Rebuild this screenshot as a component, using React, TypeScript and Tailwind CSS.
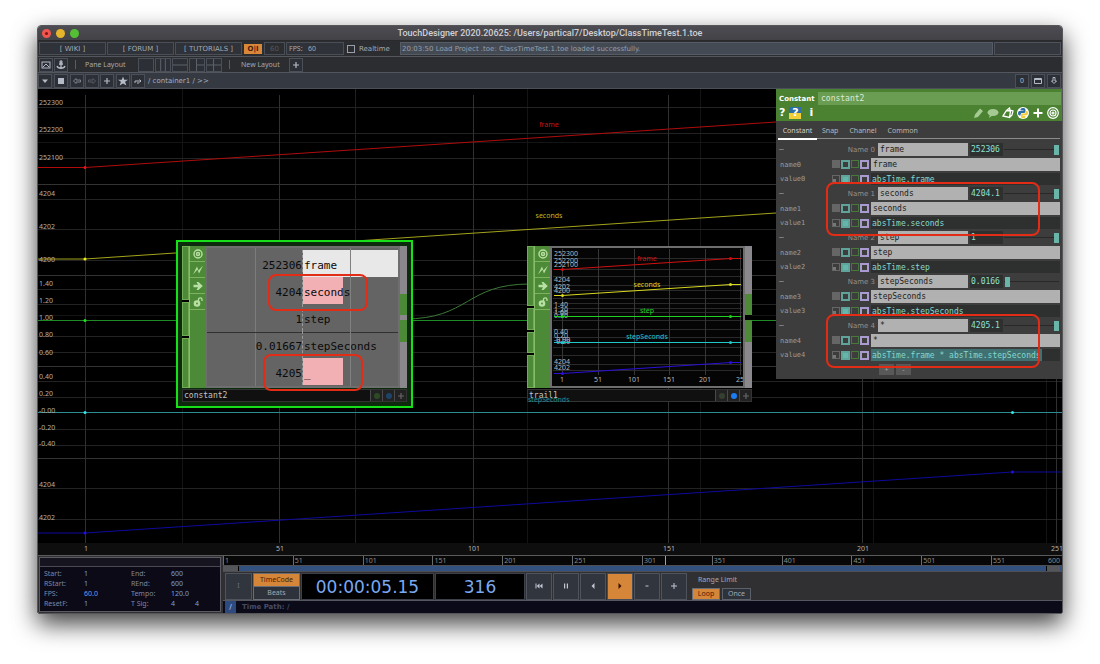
import type { ReactNode } from "react";
import clsx from "clsx";
import { twMerge } from "tailwind-merge";

type Tick = { label: string; y: number };

const yLabels: Tick[] = [
  { label: "252300", y: 105 },
  { label: "252200", y: 132 },
  { label: "252100", y: 160 },
  { label: "4204", y: 196 },
  { label: "4202", y: 229 },
  { label: "4200", y: 262 },
  { label: "1.40", y: 286 },
  { label: "1.20", y: 303 },
  { label: "1.00", y: 320 },
  { label: "0.80", y: 337 },
  { label: "0.60", y: 355 },
  { label: "0.40", y: 379 },
  { label: "0.20", y: 396 },
  { label: "-0.00", y: 413 },
  { label: "-0.20", y: 430 },
  { label: "-0.40", y: 446 },
  { label: "4204", y: 487 },
  { label: "4202", y: 520 },
];

const gridRows = [107, 133, 158, 199, 229, 260, 289, 304, 336, 352, 381, 397, 429, 445, 488, 519];
const laneRows = [184, 275, 366, 458];
const xTicks = [1, 51, 101, 151, 201, 251];

const trailLabels: Tick[] = [
  { label: "252300", y: 256 },
  { label: "252200", y: 263 },
  { label: "252100", y: 267 },
  { label: "4204", y: 282 },
  { label: "4202", y: 289 },
  { label: "4200", y: 293 },
  { label: "1.40", y: 307 },
  { label: "1.20", y: 312 },
  { label: "1.00", y: 315 },
  { label: "0.80", y: 318 },
  { label: "0.40", y: 334 },
  { label: "0.20", y: 338 },
  { label: "-0.00", y: 342 },
  { label: "-0.20", y: 344 },
  { label: "4204", y: 364 },
  { label: "4202", y: 370 },
];

const trailLines = [
  { name: "frame", color: "#d01010", y0: 269, y1: 258, ty: 261 },
  { name: "seconds", color: "#d8d820", y0: 295, y1: 284, ty: 287 },
  { name: "step", color: "#20d020", y0: 316, y1: 316, ty: 313 },
  { name: "stepSeconds", color: "#20c8c8", y0: 342, y1: 342, ty: 339 },
  { name: "", color: "#2a10d8", y0: 373, y1: 362, ty: 0 },
];

const params = [
  { name: "frame", value: "252306", expr: "absTime.frame", pos: 100 },
  { name: "seconds", value: "4204.1", expr: "absTime.seconds", pos: 100 },
  { name: "step", value: "1", expr: "absTime.step", pos: 100 },
  { name: "stepSeconds", value: "0.0166", expr: "absTime.stepSeconds", pos: 2 },
  { name: "*", value: "4205.1", expr: "absTime.frame * absTime.stepSeconds", pos: 100 },
];

const channels = [
  { value: "252306", name: "frame", bar: "w-[95px] bg-[#e8e8e8]" },
  { value: "4204", name: "seconds", bar: "w-10 bg-[#f2b0b4]" },
  { value: "1", name: "step", bar: "w-0" },
  { value: "0.01667", name: "stepSeconds", bar: "w-0" },
  { value: "4205", name: "_", bar: "w-10 bg-[#f2b0b4]" },
];

const timeInfo = [
  ["Start:", "1", "End:", "600", ""],
  ["RStart:", "1", "REnd:", "600", ""],
  ["FPS:", "60.0", "Tempo:", "120.0", ""],
  ["ResetF:", "1", "T Sig:", "4", "4"],
];

const ToolButton = ({
  label,
  children,
  className,
}: {
  label: string;
  children?: ReactNode;
  className?: string;
}) => (
  <button
    type="button"
    aria-label={label}
    className={twMerge(
      "flex h-[14px] w-[14px] shrink-0 items-center justify-center border border-[#4b4f57] bg-[#2c2f35] text-[#b4bac6]",
      className
    )}
  >
    {children}
  </button>
);

const TitleBar = () => (
  <header className="relative flex h-[15px] items-center justify-center border-b border-[#2a2a2d] bg-gradient-to-b from-[#4c4c52] to-[#424247]">
    <div className="absolute left-1 flex gap-[5px]">
      <span className="flex size-[9px] items-center justify-center rounded-full bg-[#f0564f]">
        <span className="size-[3px] rounded-full bg-[#7a1410]" />
      </span>
      <span className="size-[9px] rounded-full bg-[#e5b52c]" />
      <span className="size-[9px] rounded-full bg-[#54bf35]" />
    </div>
    <h1 className="font-['Roboto'] text-[9px] font-medium text-[#d0d0d4]">
      TouchDesigner 2020.20625: /Users/partical7/Desktop/ClassTimeTest.1.toe
    </h1>
  </header>
);

const MenuBar = () => (
  <nav className="flex h-4 items-center gap-px border-b border-[#53565c] bg-[#2b2d31] px-px font-['DejaVu_Sans'] text-[#a4a9b3]">
    {["WIKI", "FORUM", "TUTORIALS"].map((item) => (
      <a
        key={item}
        href="#"
        className="flex h-[13px] w-[67px] items-center justify-center border border-[#4a4e56] bg-[#2f3238]"
      >
        [ {item} ]
      </a>
    ))}
    <button
      type="button"
      className="ml-px h-[10px] w-[18px] bg-[#d9883a] font-bold leading-[10px] text-[#4a1c08]"
    >
      O|I
    </button>
    <button
      type="button"
      className="ml-px flex h-[13px] w-[21px] items-center justify-center border border-[#4a4e56] text-[#54585f]"
    >
      60
    </button>
    <div className="flex h-[13px] w-[58px] items-center whitespace-pre border border-[#4a4e56] bg-[#2f3238] px-0.5 font-['Noto_Sans']">
      FPS:{"   "}60
    </div>
    <label className="ml-0.5 flex w-[52px] items-center gap-1 text-[#a4a9b3]">
      <input type="checkbox" className="size-2 appearance-none border border-[#9a9ea8]" />
      Realtime
    </label>
    <div className="flex h-[13px] flex-1 items-center truncate border border-[#565c66] bg-[#434a54] px-px text-[#959fad]">
      20:03:50 Load Project .toe: ClassTimeTest.1.toe loaded successfully.
    </div>
    <div className="h-[13px] w-[67px] border border-[#4e525a] bg-[#34373e]" />
  </nav>
);

const layoutPaths = ["", "M5 0V12M10 0V12", "M0 6H15", "M7 0V12M7 6H15", "M7 0V12M0 6H15"];

const LayoutBar = () => (
  <div className="flex h-4 items-center gap-px border-b border-[#53565c] bg-[#2b2d30] px-px text-[#a4a9b3]">
    <ToolButton label="Palette">
      <svg viewBox="0 0 10 10" className="size-[10px]" fill="none" stroke="currentColor">
        <rect x="1" y="2" width="8" height="6" />
        <path d="M2 7L5 4L8 7" />
      </svg>
    </ToolButton>
    <ToolButton label="Anchor">
      <svg viewBox="0 0 10 10" className="size-[10px]" fill="none" stroke="currentColor" strokeWidth="1.3">
        <path d="M5 2V9M3 4H7M1 6C2 9 8 9 9 6" />
        <circle cx="5" cy="1.8" r="1" />
      </svg>
    </ToolButton>
    <span className="mx-1.5 h-[9px] w-px bg-[#5a5d63]" />
    <span className="mx-0.5 w-[50px]">Pane Layout</span>
    {layoutPaths.map((d, i) => (
      <ToolButton key={i} label={`Layout ${i + 1}`} className="w-4">
        <svg viewBox="0 0 15 12" preserveAspectRatio="none" className="size-full" fill="none" stroke="#60646c">
          <path d={d} />
        </svg>
      </ToolButton>
    ))}
    <span className="ml-1.5 h-[9px] w-px bg-[#5a5d63]" />
    <span className="ml-2.5 w-[47px]">New Layout</span>
    <ToolButton label="Add layout">
      <PlusGlyph />
    </ToolButton>
  </div>
);

const PlusGlyph = () => (
  <svg viewBox="0 0 8 8" className="size-2" stroke="currentColor" strokeWidth="1.2">
    <path d="M4 1V7M1 4H7" />
  </svg>
);

const PathBar = () => (
  <div className="flex h-4 items-center gap-px border-b border-[#4b4f57] bg-[#343942] text-[#a9b0bd]">
    <ToolButton label="History">
      <svg viewBox="0 0 8 8" className="size-2" fill="currentColor">
        <path d="M1 2.500H7L4 6Z" />
      </svg>
    </ToolButton>
    <ToolButton label="Stop" className="ml-px">
      <span className="size-1.5 bg-[#b4bac6]" />
    </ToolButton>
    <ToolButton label="Back" className="ml-px text-[#7d828c]">
      <svg viewBox="0 0 10 8" className="h-2 w-[10px]" fill="none" stroke="currentColor">
        <path d="M1.5 4L4 1.5V3H8.500V5H4V6.500Z" />
      </svg>
    </ToolButton>
    <ToolButton label="Forward" className="text-[#565b64]">
      <svg viewBox="0 0 10 8" className="h-2 w-[10px]" fill="none" stroke="currentColor">
        <path d="M8.500 4L6 1.500V3H1.500V5H6V6.500Z" />
      </svg>
    </ToolButton>
    <ToolButton label="Add">
      <PlusGlyph />
    </ToolButton>
    <ToolButton label="Bookmark" className="ml-px">
      <svg viewBox="0 0 24 24" className="size-[10px]" fill="currentColor">
        <path d="M12 1l3 8h9l-7 5 3 9-8-5-8 5 3-9-7-5h9z" />
      </svg>
    </ToolButton>
    <ToolButton label="Up">
      <svg viewBox="0 0 10 8" className="h-2 w-[10px]" fill="none" stroke="currentColor">
        <path d="M2 6V4H8M6.500 2.500L8 4L6.500 5.500M4 6H6" />
      </svg>
    </ToolButton>
    <span className="flex-1 pl-0.5 font-['DejaVu_Sans']">/ container1 / &gt;&gt;</span>
    <div className="flex gap-0.5 pr-px">
      <ToolButton label="Level">0</ToolButton>
      <ToolButton label="Maximize">
        <svg viewBox="0 0 8 8" className="size-2" fill="none" stroke="currentColor">
          <path d="M.5 1.500H7.500V6.500H.5ZM.5 2.500H7.500" />
        </svg>
      </ToolButton>
      <ToolButton label="Collapse">
        <svg viewBox="0 0 8 8" className="size-2" fill="none" stroke="currentColor">
          <path d="M3 .5H5V4H6.500L4 6.500L1.500 4H3Z" />
        </svg>
      </ToolButton>
    </div>
  </div>
);

const Backdrop = () => (
  <svg
    viewBox="38 89 1024 466"
    preserveAspectRatio="xMinYMin slice"
    className="absolute inset-0 size-full text-[7px]"
    fill="none"
  >
    <rect x="38" y="543" width="1024" height="12" fill="#0e0e0e" />
    {[182, 355, 527, 700, 873, 1046].map((x) => (
      <path key={x} d={`M${x}.5 89V543`} stroke={x === 355 ? "#1c1c3c" : "#141416"} />
    ))}
    {[142, 315].map((y) => (
      <path key={y} d={`M38 ${y}.5H1062`} stroke="#141416" />
    ))}
    {gridRows.map((y) => (
      <path key={y} d={`M38 ${y}.5H1062`} stroke="#232323" />
    ))}
    {laneRows.map((y) => (
      <path key={y} d={`M38 ${y}.5H1062`} stroke="#333333" />
    ))}
    {xTicks.map((t, i) => (
      <g key={t}>
        <path d={`M${85 + Math.round(i * 194.2)}.5 95V543`} stroke="#303030" />
        <text x={86 + Math.round(i * 194.2)} y="551" textAnchor="middle" fill="#b4b4b4">
          {t}
        </text>
      </g>
    ))}
    <path d="M38 167.500H85L776 122L1062 103" stroke="#b00c0c" />
    <path d="M38 259H85L776 213L1062 194" stroke="#a3a31c" />
    <path d="M38 320.500H1062" stroke="#1f8a26" />
    <path d="M38 412.500H1062" stroke="#2d8d92" />
    <path d="M38 533H85L1012 472H1062" stroke="#0d0a9c" />
    <path d="M404 319C470 319 465 284 530 284" stroke="#3c7a38" />
    <circle cx="85" cy="167.500" r="1.500" fill="#e01818" />
    <circle cx="85" cy="259" r="1.500" fill="#f0f020" />
    <circle cx="85" cy="320.500" r="1.500" fill="#20e020" />
    <circle cx="85" cy="412.500" r="1.500" fill="#30e8e8" />
    <circle cx="1012.500" cy="412.500" r="1.500" fill="#30e8e8" />
    <circle cx="85" cy="533" r="1.500" fill="#2010e0" />
    <circle cx="1012.500" cy="472" r="1.500" fill="#2010e0" />
    {yLabels.map(({ label, y }) => (
      <text key={y} x="39" y={y} fill="#b0b0b0">
        {label}
      </text>
    ))}
    <text x="549" y="127" textAnchor="middle" fill="#c81414">
      frame
    </text>
    <text x="549" y="218" textAnchor="middle" fill="#bcbc1e">
      seconds
    </text>
  </svg>
);

const NodeFlags = () => (
  <div className="flex w-4 flex-col border-l border-[#86bb68] bg-[#4c8a37] text-[#b9e0a4]">
    <button type="button" aria-label="Viewer" className="flex h-4 items-center justify-center border-b border-[#7db35f]">
      <svg viewBox="0 0 10 10" className="size-[10px]" fill="none" stroke="currentColor" strokeWidth="1.400">
        <circle cx="5" cy="5" r="4" />
        <circle cx="5" cy="5" r="1.500" />
      </svg>
    </button>
    <button type="button" aria-label="Clone immune" className="flex h-4 items-center justify-center border-b border-[#7db35f]">
      <svg viewBox="0 0 10 10" className="size-[10px]" fill="currentColor">
        <path d="M0 9.500L4 1.500L5.500 5.500L10 .5L6 8.500L4.500 4.500Z" />
      </svg>
    </button>
    <button type="button" aria-label="Bypass" className="flex h-4 items-center justify-center border-b border-[#7db35f]">
      <svg viewBox="0 0 10 10" className="size-[10px]" fill="currentColor">
        <path d="M.5 3.800H5L3.500 1H5.500L9.800 5L5.500 9H3.500L5 6.200H.5Z" />
      </svg>
    </button>
    <button type="button" aria-label="Lock" className="flex h-4 items-center justify-center border-b border-[#7db35f]">
      <svg viewBox="0 0 10 10" className="size-[10px]" fill="currentColor">
        <circle cx="4" cy="6.500" r="3.300" />
        <path d="M5.500 4V2.500C5.500 .3 9 .3 9 2.500V4" fill="none" stroke="currentColor" strokeWidth="1.300" />
        <circle cx="4" cy="6.500" r=".9" fill="#4c8a37" />
      </svg>
    </button>
  </div>
);

const OpNode = ({
  name,
  viewerOn,
  inputs,
  children,
}: {
  name: string;
  viewerOn?: boolean;
  inputs: ReactNode;
  children: ReactNode;
}) => (
  <div className="w-[225px]">
    <div className="flex h-[142px]">
      <div className="flex w-[7px] flex-col gap-0.5 bg-black">{inputs}</div>
      <NodeFlags />
      <div className="flex-1 border-2 border-[#6e6e6e] bg-[#646464]">{children}</div>
      <div className={clsx("flex w-[7px] flex-col", viewerOn ? "bg-black" : "bg-[#8a888c]")}>
        <span className="h-12 bg-[#8a888c]" />
        <span className="h-[21px] bg-[#4c8a37]" />
        <span className="h-[5px]" />
        <span className="h-[22px] bg-[#4c8a37]" />
        <span className="flex-1 bg-[#8a888c]" />
      </div>
    </div>
    <div className="mt-px flex h-[13px] items-center border border-[#333333] bg-[#101010]">
      <span className="flex-1 pl-px font-['DejaVu_Sans_Mono'] text-[8px] text-[#c4c4c4]">{name}</span>
      <div className="flex h-full">
        <button type="button" aria-label="Render flag" className="flex w-3 items-center justify-center border-l border-[#4a4a4a] bg-[#222222]">
          <span className={clsx("size-1.5 rounded-full", viewerOn ? "bg-[#36402f]" : "bg-[#2c4a24]")} />
        </button>
        <button type="button" aria-label="Display flag" className="flex w-3 items-center justify-center border-l border-[#4a4a4a] bg-[#222222]">
          <span className={clsx("size-1.5 rounded-full", viewerOn ? "bg-[#1c7df2]" : "bg-[#1d4468]")} />
        </button>
        <button type="button" aria-label="Activate" className="flex w-3 items-center justify-center border-l border-[#4a4a4a] bg-[#222222] text-[#666666]">
          <PlusGlyph />
        </button>
      </div>
    </div>
  </div>
);

const inputSegment = "border border-[#71ab54] bg-[#4c8a37]";

const ConstantNode = () => (
  <div className="absolute left-[138px] top-[151px] border-2 border-[#18e018] bg-[#0c2a0c] p-1">
    <OpNode
      name="constant2"
      inputs={
        <>
          <span className={clsx("h-[54px]", inputSegment)} />
          <span className={clsx("h-[34px]", inputSegment)} />
          <span className={clsx("flex-1", inputSegment)} />
        </>
      }
    >
      <div className="relative flex h-full flex-col pt-0.5 font-['DejaVu_Sans_Mono'] text-[11px] leading-[31px] text-[#0a0a0a]">
        <span className="absolute inset-y-0 left-12 w-px bg-[#7c7c7c]" />
        <span className="absolute inset-x-0 top-[84px] h-px bg-[#303030]" />
        {channels.map((chan) => (
          <div key={chan.name} className="flex h-[27px]">
            <span className="w-[95px] shrink-0 text-right">{chan.value}</span>
            <div className="relative h-full flex-1 border-l border-dashed border-[#9a9a9a]">
              <span className={clsx("absolute inset-y-0 left-0", chan.bar)} />
              <span className="relative pl-px">{chan.name}</span>
            </div>
          </div>
        ))}
        <span className="absolute inset-y-0 left-[143px] w-px bg-[#808080]" />
      </div>
    </OpNode>
  </div>
);

const TrailNode = () => (
  <div className="absolute left-[489px] top-[157px]">
    <OpNode
      name="trail1"
      viewerOn
      inputs={
        <>
          <span className={clsx("h-[60px]", inputSegment)} />
          <span className={clsx("h-[22px]", inputSegment)} />
          <span className={clsx("h-[21px]", inputSegment)} />
          <span className={clsx("flex-1", inputSegment)} />
        </>
      }
    >
      <svg viewBox="552 248 191 138" className="size-full bg-[#050505] text-[7px]" fill="none">
        {[258, 269, 276, 285, 290, 298, 303, 308, 312, 320, 329, 337, 347, 355, 364, 370].map((y) => (
          <path key={y} d={`M553 ${y}.5H742`} stroke="#2a2a2a" />
        ))}
        {[562, 598, 634, 669, 705, 740].map((x, i) => (
          <g key={x}>
            <path d={`M${x}.5 249V375`} stroke="#363636" />
            <text x={x} y="382" textAnchor="middle" fill="#b8b8b8">
              {["1", "51", "101", "151", "201", "25"][i]}
            </text>
          </g>
        ))}
        {trailLabels.map(({ label, y }) => (
          <text key={y} x="554" y={y} fill="#b8b8b8">
            {label}
          </text>
        ))}
        {trailLines.map((line) => (
          <g key={line.color} fill={line.color}>
            <path d={`M554 ${line.y0}.5H562L731 ${line.y1}.5H741`} fill="none" stroke={line.color} />
            <circle cx="562.500" cy={line.y0 + 0.5} r="1.500" />
            <circle cx="730.500" cy={line.y1 + 0.5} r="1.500" />
            <text x="647" y={line.ty} textAnchor="middle">
              {line.name}
            </text>
          </g>
        ))}
      </svg>
    </OpNode>
    <span className="absolute left-px top-[149px] leading-[10px] text-[#1a8c90]">stepSeconds</span>
  </div>
);

const ModeBoxes = ({ expression }: { expression?: boolean }) => (
  <div className="flex w-[39px] shrink-0 gap-px">
    <button
      type="button"
      aria-label="Constant mode"
      className={clsx("flex size-2 items-end border border-[#666666]", !expression && "bg-[#666666]")}
    >
      {expression && <span className="size-[3px] bg-[#777777]" />}
    </button>
    <button
      type="button"
      aria-label="Expression mode"
      className={clsx("size-[9px] border-2 border-[#5fa39a]", expression && "bg-[#66b5ab]")}
    />
    <button type="button" aria-label="Export mode" className="size-2 border border-[#477a3a]" />
    <button type="button" aria-label="Bind mode" className="size-[9px] border-2 border-[#a99bd2]" />
  </div>
);

const ParamGroup = ({ index, param }: { index: number; param: (typeof params)[number] }) => {
  const last = index === 4;

  return (
    <div className="font-['DejaVu_Sans_Mono'] text-[8px]">
      <div className="flex h-[15px] items-center">
        <span className="w-[30px] pl-px text-[#9c9c9c]">—</span>
        <label htmlFor={`chan${index}`} className="flex-1 pr-[3px] text-right font-['DejaVu_Sans'] text-[7px] text-[#909090]">
          Name {index}
        </label>
        <input
          id={`chan${index}`}
          defaultValue={param.name}
          className="h-[13px] w-[90px] bg-[#b1b1b1] pl-0.5 text-[#222222]"
        />
        <input
          aria-label={`Value ${index}`}
          defaultValue={param.value}
          className="ml-0.5 h-[13px] w-[33px] bg-[#2e3030] pl-px text-[#8fe0d2]"
        />
        <input
          type="range"
          aria-label={`Slider ${index}`}
          defaultValue={param.pos}
          className="ml-px mr-px h-[11px] w-[55px] appearance-none bg-[linear-gradient(#282828,#282828)] bg-[length:100%_1px] bg-center bg-no-repeat [&::-webkit-slider-thumb]:h-[10px] [&::-webkit-slider-thumb]:w-[5px] [&::-webkit-slider-thumb]:appearance-none [&::-webkit-slider-thumb]:bg-[#6ab5aa]"
        />
      </div>
      <div className="flex h-[15px] items-center">
        <label htmlFor={`name${index}`} className="flex-1 pl-0.5 text-[7px] text-[#9c9c9c]">
          name{index}
        </label>
        <ModeBoxes />
        <input
          id={`name${index}`}
          defaultValue={param.name}
          className="h-[13px] w-[189px] bg-[#b1b1b1] pl-0.5 text-[#222222]"
        />
      </div>
      <div className="flex h-[14px] items-center">
        <label htmlFor={`value${index}`} className="flex-1 pl-0.5 text-[7px] text-[#9c9c9c]">
          value{index}
        </label>
        <ModeBoxes expression />
        <div className="w-[189px] bg-[#2e3030]">
          <input
            id={`value${index}`}
            defaultValue={param.expr}
            className={clsx(
              "block h-[12px] pl-px text-[#86d8cc]",
              last ? "w-[171px] bg-[#3f7072]" : "w-full"
            )}
          />
        </div>
      </div>
    </div>
  );
};

const ParamPanel = () => (
  <aside className="absolute right-0 top-0 w-[286px] bg-[#3d3d3d]">
    <div className="h-8 bg-[#4a8232] px-px pt-[3px] text-white">
      <div className="flex items-center">
        <label htmlFor="opname" className="w-[41px] pl-0.5 font-['DejaVu_Sans'] text-[7px] font-bold">
          Constant
        </label>
        <input
          id="opname"
          defaultValue="constant2"
          className="h-[13px] flex-1 bg-[#6a9c52] pl-[3px] font-['DejaVu_Sans_Mono'] text-[8px] text-[#dcebd2]"
        />
      </div>
      <div className="flex items-center gap-1 px-0.5 pt-0.5 font-['DejaVu_Sans'] text-[11px] font-bold leading-3">
        <button type="button">?</button>
        <button type="button" className="h-3 w-3 bg-[linear-gradient(#2f6ea5_50%,#f2cf3a_50%)]">
          ?
        </button>
        <button type="button" className="pl-1">i</button>
        <div className="flex flex-1 justify-end gap-[3px]">
          <svg viewBox="0 0 12 12" className="size-3" fill="#a5cb92">
            <path d="M2 11L3 7.500L8 1.500L11 4L6 10ZM4 8.500L5 9.500" />
          </svg>
          <svg viewBox="0 0 12 12" className="size-3" fill="#a5cb92">
            <ellipse cx="6" cy="5.500" rx="5.500" ry="3.500" />
            <path d="M3 7L2 11L6 8Z" />
          </svg>
          <svg viewBox="0 0 12 12" className="size-3" fill="none" stroke="#fff" strokeWidth="1.300">
            <path d="M4.500 3.500L8.500 4L7.500 10.500L1 9ZM4.500 3.500L7.500 1L8 3L11 4L10 8L8 10" />
          </svg>
          <svg viewBox="0 0 12 12" className="size-3">
            <circle cx="6" cy="6" r="6" fill="#fff" />
            <path d="M6 1C3.500 1 3.500 2 3.500 3.500H6.500V4H2.500C.5 4 .5 8.500 2.500 8.500H3.500C3.500 5.500 5 6 7 6C8.500 6 8.500 5 8.500 3C8.500 1.500 7.500 1 6 1Z" fill="#2f6ea5" />
            <path d="M6 11.300C8.500 11.300 8.500 10 8.500 8.800H5.500V8.300H9.500C11.500 8 11.500 4 9.500 4H9C9 7 7.500 6.500 5.500 6.500C4 6.500 4 7.500 4 9C4 11 5 11.300 6 11.300Z" fill="#f2cf3a" />
          </svg>
          <svg viewBox="0 0 12 12" className="size-3" stroke="#fff" strokeWidth="2">
            <path d="M6 1.500V10.500M1.500 6H10.500" />
          </svg>
          <svg viewBox="0 0 12 12" className="size-3" fill="none" stroke="#fff" strokeWidth="1.200">
            <circle cx="6" cy="6" r="5.300" />
            <circle cx="6" cy="6" r="3" />
            <circle cx="6" cy="6" r="1" />
          </svg>
        </div>
      </div>
    </div>
    <div className="mx-0.5 flex h-[19px] text-[#b8b8b8]">
      <button type="button" className="h-full w-[39px] border-b-2 border-white pt-0.5 text-[#d0d0d0]">
        Constant
      </button>
      <div className="flex h-[18px] flex-1 gap-[11px] border-b border-[#8c8c8c] pl-[5px] pt-0.5">
        <button type="button">Snap</button>
        <button type="button">Channel</button>
        <button type="button">Common</button>
      </div>
    </div>
    <div className="pl-0.5 pr-0.5 pt-0.5">
      {params.map((param, i) => (
        <ParamGroup key={param.name} index={i} param={param} />
      ))}
    </div>
    <div className="flex h-[17px] gap-0.5 pl-[103px] pt-0.5 text-[#a0a0a0]">
      <button type="button" className="flex h-[11px] w-[15px] items-center justify-center bg-[#585858]">
        +
      </button>
      <button type="button" className="flex h-[11px] w-[15px] items-center justify-center bg-[#585858]">
        -
      </button>
    </div>
  </aside>
);

const Mark = ({ className }: { className: string }) => (
  <div className={clsx("pointer-events-none absolute rounded-lg border-2 border-[#e22c16]", className)} />
);

const Network = () => (
  <main className="relative h-[466px] overflow-hidden bg-black">
    <Backdrop />
    <ConstantNode />
    <TrailNode />
    <ParamPanel />
    <Mark className="left-[230px] top-[185px] h-[37px] w-[100px]" />
    <Mark className="left-[225px] top-[265px] h-[37px] w-[100px]" />
    <Mark className="right-[22px] top-[93px] h-[54px] w-[214px]" />
    <Mark className="right-[22px] top-[225px] h-[54px] w-[214px]" />
  </main>
);

const TransportButton = ({ label, active, d }: { label: string; active?: boolean; d: string }) => (
  <button
    type="button"
    aria-label={label}
    className={clsx(
      "flex h-[27px] w-[26px] items-center justify-center border",
      active ? "border-[#4a4d55] bg-[#d58638] text-[#3a1004]" : "border-[#4f535c] bg-[#31353d] text-[#c0c6d2]"
    )}
  >
    <svg viewBox="0 0 10 10" className="size-[10px]" fill="currentColor">
      <path d={d} />
    </svg>
  </button>
);

const Timeline = () => (
  <footer className="flex h-[58px] border-t border-[#5a5a5a] bg-[#303033]">
    <section className="m-px mr-0.5 w-[182px] border border-[#5a5a62] bg-[#0b0a16]">
      <div className="h-[9px] border-b border-[#4a4a52] bg-[#16151f]" />
      <dl className="pl-1 pt-0.5">
        {timeInfo.map(([a, b, c, d, e]) => (
          <div key={a} className="grid h-[10px] grid-cols-[40px_47px_40px_24px_1fr] items-center leading-[10px] text-[#8088a0]">
            <dt>{a}</dt>
            <dd className="text-[#6f9fe8]">{b}</dd>
            <dt>{c}</dt>
            <dd className="text-[#6f9fe8]">{d}</dd>
            <dd className="text-[#6f9fe8]">{e}</dd>
          </div>
        ))}
      </dl>
    </section>
    <section className="flex min-w-0 flex-1 flex-col">
      <div className="relative flex h-[9px] bg-[#070707] leading-[9px] text-[#8c8c8c]">
        {[1, 51, 101, 151, 201, 251, 301, 351, 401, 451, 501].map((t) => (
          <span key={t} className="flex-[70] border-l border-[#6c6c6c] pl-px">
            {t}
          </span>
        ))}
        <span className="flex flex-[69] justify-between border-l border-[#6c6c6c] pl-px pr-0.5">
          551 <span>600</span>
        </span>
        <span className="absolute inset-y-0 left-[442px] w-px bg-[#7aa8f0]" />
      </div>
      <div className="flex h-[7px] border-y border-[#4d4f55] bg-[#33517f]">
        <span className="w-4 border-r border-black bg-[#55565a]" />
        <span className="flex-1" />
        <span className="mr-0.5 w-[14px] border-l border-black bg-[#55565a]" />
      </div>
      <div className="flex h-[29px] items-center gap-px border-b border-[#55575e] pl-0.5">
        <button type="button" className="h-[27px] w-[27px] border border-[#4f535c] bg-[#31353d] text-[#6c7486]">
          I
        </button>
        <div className="flex h-[27px] w-[47px] flex-col border border-[#6a6d75]">
          <button type="button" className="h-3 bg-[#d58638] leading-3 text-[#4a1c08]">
            TimeCode
          </button>
          <button type="button" className="flex-1 border-t border-[#6a6d75] bg-[#2e323a] leading-3 text-[#a4a9b3]">
            Beats
          </button>
        </div>
        <div className="flex h-[27px] w-[133px] items-center justify-center border border-[#3d4048] bg-black pt-0.5 font-['DejaVu_Sans'] text-[17px] text-[#79a9f2]">
          00:00:05.15
        </div>
        <div className="flex h-[27px] w-[90px] items-center justify-center border border-[#3d4048] bg-black pt-0.5 font-['DejaVu_Sans'] text-[17px] text-[#79a9f2]">
          316
        </div>
        <TransportButton label="Rewind" d="M1.500 2.500H2.500V7.500H1.500ZM5.500 2.500V7.500L2.700 5ZM8.500 2.500V7.500L5.700 5Z" />
        <TransportButton label="Pause" d="M3 2.500H4.200V7.500H3ZM5.800 2.500H7V7.500H5.800Z" />
        <TransportButton label="Play backward" d="M6.500 2V8L3.500 5Z" />
        <TransportButton label="Play" active d="M3.500 2V8L6.500 5Z" />
        <TransportButton label="Step back" d="M3.500 4.500H6.500V5.500H3.500Z" />
        <TransportButton label="Step forward" d="M4.500 2H5.500V4.500H8V5.500H5.500V8H4.500V5.500H2V4.500H4.500Z" />
        <div className="flex h-[27px] flex-col justify-between pl-1 pt-0.5 text-[#a4a9b3]">
          <span className="pl-1.5 leading-[10px]">Range Limit</span>
          <div className="flex gap-0.5">
            <button type="button" className="h-3 w-7 border border-[#6a6d75] bg-[#d58638] leading-[10px] text-[#4a1c08]">
              Loop
            </button>
            <button type="button" className="h-3 w-[29px] border border-[#5c6068] bg-[#2e323a] leading-[10px]">
              Once
            </button>
          </div>
        </div>
      </div>
      <div className="flex h-3 items-center bg-[#0b0a18] pl-0.5 font-['DejaVu_Sans'] font-bold text-[#474c66]">
        <span className="flex h-full w-[11px] items-center justify-center bg-[#2d4a80] text-[#a8b8dc]">/</span>
        <span className="pl-1.5">Time Path: /</span>
      </div>
    </section>
  </footer>
);

const App = () => (
  <div className="min-h-screen bg-white px-[37px] pb-[50px] pt-[25px]">
    <div className="overflow-hidden rounded-t-[4px] rounded-b-[2px] border border-[#55555a] font-['Noto_Sans',sans-serif] text-[7px] leading-[10px] shadow-[0_10px_24px_rgba(0,0,0,0.75)]">
      <TitleBar />
      <MenuBar />
      <LayoutBar />
      <PathBar />
      <Network />
      <Timeline />
    </div>
  </div>
);

export default App;
